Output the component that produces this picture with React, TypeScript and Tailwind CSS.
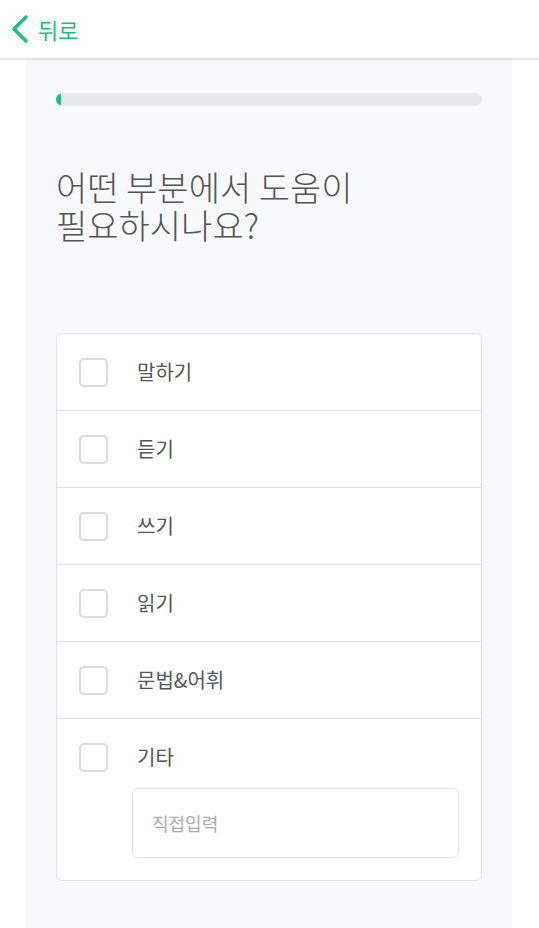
import { useState } from "react"

const options = ["말하기", "듣기", "쓰기", "읽기", "문법&어휘", "기타"]

export default function App() {
  const [checked, setChecked] = useState<string[]>([])

  const toggle = (o: string) =>
    setChecked((c) => (c.includes(o) ? c.filter((x) => x !== o) : [...c, o]))

  return (
    <div
      className="min-h-screen bg-white flex flex-col"
      style={{ fontFamily: '"Noto Sans CJK KR", "Noto Sans", sans-serif' }}
    >
      <header className="h-[60px] flex items-center pl-[10px] border-b-2 border-[#e6e6e6] shrink-0">
        <button className="flex items-center gap-[8px] text-[#1cbf80]">
          <svg width="20" height="30" viewBox="0 0 20 30" fill="none">
            <path d="M16 3 L4 15 L16 27" stroke="#1cbf80" strokeWidth="3.5" strokeLinecap="round" strokeLinejoin="round" />
          </svg>
          <span className="text-[22px] leading-none">뒤로</span>
        </button>
      </header>

      <main className="flex-1 mx-[26px] w-[486px] bg-[#f8f9fc] px-[30px] pt-[33px] pb-[48px]">
        <div className="h-[13px] rounded-full bg-[#e6e8ee] overflow-hidden">
          <div className="h-full w-[5px] rounded-full bg-[#1cbf80]" />
        </div>

        <h1 className="mt-[62px] text-[34px] leading-[38px] font-light text-[#555555]">
          어떤 부분에서 도움이
          <br />
          필요하시나요?
        </h1>

        <div className="mt-[89px] bg-white border border-[#e4e4e6] rounded-[6px]">
          {options.map((o, i) => (
            <div key={o} className={i > 0 ? "border-t border-[#e4e4e6]" : ""}>
              <label className="h-[76px] flex items-center pl-[22px] cursor-pointer">
                <span
                  onClick={() => toggle(o)}
                  className={
                    "w-[29px] h-[29px] rounded-[5px] border-2 " +
                    (checked.includes(o) ? "border-[#1cbf80] bg-[#1cbf80]" : "border-[#dcdcdc] bg-white")
                  }
                />
                <span className="ml-[29px] text-[20px] text-[#555555]">{o}</span>
              </label>
              {o === "기타" && (
                <div className="pl-[75px] pr-[22px] -mt-[7px] pb-[22px]">
                  <input
                    placeholder="직접입력"
                    className="w-full h-[70px] border border-[#e4e4e6] rounded-[6px] px-[19px] text-[18px] text-[#555] placeholder:text-[#aaaaaa] outline-none"
                  />
                </div>
              )}
            </div>
          ))}
        </div>
      </main>
    </div>
  )
}
